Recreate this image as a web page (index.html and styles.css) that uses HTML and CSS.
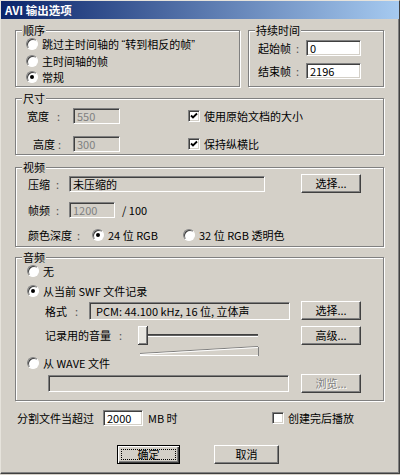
FILE: index.html
```html
<!DOCTYPE html>
<html lang="zh-CN">
  <head>
    <meta charset="utf-8" />
    <title>AVI 输出选项</title>
    <link rel="stylesheet" href="styles.css">
  </head>

  <body>
    <div class="window">
      <div class="titlebar">AVI 输出选项</div>

      <div class="dialog">
        <div class="row-top">
          <fieldset class="group order">
            <legend>顺序</legend>
            <label class="opt skip"><span class="radio"></span>跳过主时间轴的&nbsp; <span class="quote">“</span>转到相反的帧<span class="quote">”</span></label>
            <label class="opt main"><span class="radio"></span>主时间轴的帧</label>
            <label class="opt normal"><span class="radio on"></span>常规</label>
          </fieldset>

          <fieldset class="group duration">
            <legend>持续时间</legend>
            <div class="line start">
              <span class="dur-label">起始帧<span class="colon">:</span></span>
              <span class="edit dur">0</span>
            </div>
            <div class="line end">
              <span class="dur-label">结束帧<span class="colon">:</span></span>
              <span class="edit dur">2196</span>
            </div>
          </fieldset>
        </div>

        <fieldset class="group size">
          <legend>尺寸</legend>
          <div class="line width-row">
            <span class="size-label">宽度<span class="colon">:</span></span>
            <span class="edit off size-edit">550</span>
            <span class="check on"><svg width="8" height="8" viewBox="0 0 8 8"><polyline points="1,3.5 3,5.5 7,1.5" /></svg></span>
            <span class="check-text">使用原始文档的大小</span>
          </div>
          <div class="line height-row">
            <span class="size-label second">高度<span class="colon">:</span></span>
            <span class="edit off size-edit">300</span>
            <span class="check on"><svg width="8" height="8" viewBox="0 0 8 8"><polyline points="1,3.5 3,5.5 7,1.5" /></svg></span>
            <span class="check-text">保持纵横比</span>
          </div>
        </fieldset>

        <fieldset class="group video">
          <legend>视频</legend>
          <div class="line compress">
            <span class="video-label">压缩<span class="colon">:</span></span>
            <span class="edit readonly codec">未压缩的</span>
            <span class="btn">选择...</span>
          </div>
          <div class="line rate">
            <span class="video-label">帧频<span class="colon">:</span></span>
            <span class="edit off rate-edit">1200</span>
            <span class="rate-unit">/ 100</span>
          </div>
          <div class="line depth">
            <span class="depth-label">颜色深度<span class="colon">:</span></span>
            <label class="opt inline bits24"><span class="radio on"></span>24 位 RGB</label>
            <label class="opt inline"><span class="radio"></span>32 位 RGB 透明色</label>
          </div>
        </fieldset>

        <fieldset class="group audio">
          <legend>音频</legend>
          <label class="opt none"><span class="radio"></span>无</label>
          <label class="opt swf"><span class="radio on"></span>从当前 SWF 文件记录</label>
          <div class="line format">
            <span class="audio-label">格式<span class="colon">:</span></span>
            <span class="edit readonly fmt">PCM: 44.100 kHz, 16 位, 立体声</span>
            <span class="btn">选择...</span>
          </div>
          <div class="line volume">
            <span class="audio-label vol-label">记录用的音量<span class="colon">:</span></span>
            <svg class="slider" width="124" height="30" viewBox="0 0 124 30">
              <rect x="10" y="8" width="110" height="1" fill="#404040" />
              <rect x="10" y="9" width="110" height="1" fill="#606060" />
              <rect x="10" y="10" width="110" height="1" fill="#fff" />
              <line x1="2" y1="27.5" x2="120" y2="20.5" stroke="#808080" />
              <line x1="2" y1="28.5" x2="120" y2="21.5" stroke="#fff" />
              <line x1="2" y1="29.5" x2="120" y2="29.5" stroke="#fff" />
              <line x1="120.5" y1="21" x2="120.5" y2="30" stroke="#808080" />
              <rect x="0" y="0" width="10" height="19" fill="#e8e6e0" />
              <rect x="0" y="0" width="10" height="1" fill="#fff" />
              <rect x="0" y="0" width="1" height="19" fill="#fff" />
              <rect x="9" y="0" width="1" height="19" fill="#404040" />
              <rect x="0" y="18" width="10" height="1" fill="#404040" />
              <rect x="8" y="1" width="1" height="17" fill="#808080" />
              <rect x="1" y="17" width="8" height="1" fill="#808080" />
            </svg>
            <span class="btn">高级...</span>
          </div>
          <label class="opt wave"><span class="radio"></span>从 WAVE 文件</label>
          <div class="line wave-file">
            <span class="edit off wave-edit"></span>
            <span class="btn disabled">浏览...</span>
          </div>
        </fieldset>

        <div class="line split">
          <div class="split-left">
            <span>分割文件当超过</span>
            <span class="edit split-edit">2000</span>
            <span class="split-unit">MB 时</span>
          </div>
          <span class="check"></span>
          <span class="check-text">创建完后播放</span>
        </div>

        <div class="line actions">
          <span class="btn default"><span class="focus">确定</span></span>
          <span class="btn cancel">取消</span>
        </div>
      </div>
    </div>
  </body>
</html>
```

FILE: styles.css
```css
/* Base */

html,
body {
  margin: 0;
  background: #d4d0c8;
}

body {
  font-family: "Noto Sans CJK SC", "DejaVu Sans", sans-serif;
  font-size: 11px;
  color: #000;
}

.window {
  width: 400px;
  height: 474px;
  box-sizing: border-box;
  background: #d4d0c8;
  border: 1px solid;
  border-color: #e6e3dc #404040 #404040 #e6e3dc;
  box-shadow: inset -1px -1px #808080;
}

.titlebar {
  height: 18px;
  line-height: 18px;
  padding-left: 4px;
  color: #fff;
  font-weight: bold;
  font-size: 11.5px;
  background: linear-gradient(to right, #0a246a, #a6caf0);
}

.dialog {
  padding: 5px 15px 0 14px;
}

.quote {
  font-family: "Liberation Sans", sans-serif;
}

.colon {
  margin-left: 8px;
  color: #555;
}

/* Group boxes */

.group {
  margin: 0;
  padding: 0 22px 0 0;
  min-inline-size: 0;
  border: 1px solid #808080;
  box-shadow: inset 1px 1px #fff, 1px 1px #fff;
}

.group legend {
  margin-left: 6px;
  padding: 0 1px;
  line-height: 13px;
  background: #d4d0c8;
}

.row-top {
  display: flex;
  gap: 8px;
  align-items: stretch;
}

.order {
  width: 225px;
  box-sizing: border-box;
  padding-bottom: 2px;
}

.duration {
  flex: 1;
}

.size {
  margin-top: 5px;
  padding-bottom: 2px;
}

.video {
  margin-top: 6px;
  padding-bottom: 4px;
}

.audio {
  margin-top: 4px;
  padding-bottom: 7px;
}

.line {
  display: flex;
  align-items: center;
}

/* Radio buttons and check boxes */

.opt {
  display: flex;
  align-items: center;
  height: 14px;
  line-height: 14px;
  white-space: nowrap;
}

.radio {
  width: 12px;
  height: 12px;
  box-sizing: border-box;
  margin-right: 4px;
  border-radius: 50%;
  background: #fff;
  border: 1px solid;
  border-color: #808080 #fff #fff #808080;
  box-shadow: inset 1px 1px #404040;
  display: flex;
  align-items: center;
  justify-content: center;
  flex: none;
}

.radio.on::after {
  content: '';
  width: 4px;
  height: 4px;
  border-radius: 50%;
  background: #000;
}

.check {
  width: 12px;
  height: 12px;
  box-sizing: border-box;
  background: #fff;
  border: 1px solid;
  border-color: #808080 #fff #fff #808080;
  box-shadow: inset 1px 1px #404040, inset -1px -1px #d4d0c8;
  display: flex;
  align-items: center;
  justify-content: center;
  flex: none;
}

.check svg polyline {
  fill: none;
  stroke: #000;
  stroke-width: 1.8;
}

.check-text {
  margin-left: 4px;
  white-space: nowrap;
}

/* Edit fields */

.edit {
  box-sizing: border-box;
  height: 16px;
  line-height: 14px;
  padding-left: 3px;
  background: #fff;
  border: 1px solid;
  border-color: #808080 #fff #fff #808080;
  box-shadow: inset 1px 1px #404040, inset -1px -1px #d4d0c8;
  white-space: nowrap;
  overflow: hidden;
  flex: none;
}

.edit.off {
  background: #d4d0c8;
  color: #808080;
}

.edit.readonly {
  background: #d4d0c8;
}

/* Push buttons */

.btn {
  box-sizing: border-box;
  width: 60px;
  height: 19px;
  line-height: 17px;
  text-align: center;
  background: #d4d0c8;
  border: 1px solid;
  border-color: #fff #404040 #404040 #fff;
  box-shadow: inset -1px -1px #808080;
  margin-left: auto;
  flex: none;
}

.btn.disabled {
  color: #808080;
  text-shadow: 1px 1px #fff;
}

.btn.default {
  border-color: #000;
  box-shadow: inset 1px 1px #fff, inset -1px -1px #404040, inset -2px -2px #808080;
  padding: 3px;
  display: flex;
}

.btn.default .focus {
  flex: 1;
  line-height: 9px;
  border: 1px dotted #000;
}

/* Order / duration */

.order .opt {
  padding-left: 10px;
}

.order .main {
  margin-top: 3px;
}

.order .normal {
  margin-top: 2px;
}

.duration .line {
  height: 16px;
}

.duration .start {
  margin-top: 3px;
}

.duration .end {
  margin-top: 7px;
}

.dur-label {
  width: 60px;
  padding-left: 9px;
  white-space: nowrap;
}

.dur-label .colon {
  margin-left: 5px;
}

.edit.dur {
  width: 55px;
}

/* Size */

.size .line {
  height: 16px;
}

.size .width-row {
  margin-top: 3px;
}

.size .height-row {
  margin-top: 12px;
}

.size-label {
  width: 46px;
  padding-left: 11px;
  white-space: nowrap;
}

.size-label.second {
  width: 40px;
  padding-left: 17px;
}

.size-label.second .colon {
  margin-left: 3px;
}

.size-edit {
  width: 47px;
}

.size .check {
  margin-left: 68px;
}

/* Video */

.video .compress {
  height: 19px;
}

.video .rate {
  margin-top: 9px;
  height: 16px;
}

.video .depth {
  margin-top: 10px;
  height: 14px;
}

.video-label {
  width: 41px;
  padding-left: 12px;
  white-space: nowrap;
}

.video-label .colon {
  margin-left: 6px;
}

.codec {
  width: 196px;
  height: 16px;
}

.rate-edit {
  width: 46px;
}

.rate-unit {
  margin-left: 7px;
}

.depth-label {
  width: 64px;
  padding-left: 12px;
  white-space: nowrap;
}

.depth-label .colon {
  margin-left: 5px;
}

.bits24 {
  width: 91px;
}

/* Audio */

.audio .opt {
  padding-left: 11px;
}

.audio .swf {
  margin-top: 6px;
}

.audio .format {
  margin-top: 3px;
  height: 19px;
}

.audio-label {
  width: 44px;
  padding-left: 29px;
  white-space: nowrap;
}

.fmt {
  width: 201px;
  height: 18px;
  line-height: 16px;
  padding-left: 6px;
}

.audio .volume {
  margin-top: 6px;
  align-items: flex-start;
}

.vol-label {
  width: 93px;
  line-height: 19px;
}

.slider {
  display: block;
  flex: none;
}

.audio .wave-file {
  margin-top: 4px;
  height: 19px;
}

.wave-edit {
  width: 241px;
  height: 17px;
  margin-left: 32px;
}

/* Bottom rows */

.split {
  margin-top: 9px;
  height: 16px;
}

.split-left {
  width: 257px;
  display: flex;
  align-items: center;
  padding-left: 2px;
  box-sizing: border-box;
}

.split-left span:first-child {
  width: 86px;
  white-space: nowrap;
}

.split-edit {
  width: 40px;
}

.split-unit {
  margin-left: 5px;
}

.actions {
  margin-top: 19px;
  padding-left: 102px;
}

.actions .btn {
  margin-left: 0;
  width: 63px;
}

.actions .cancel {
  margin-left: 34px;
  width: 65px;
}
```
